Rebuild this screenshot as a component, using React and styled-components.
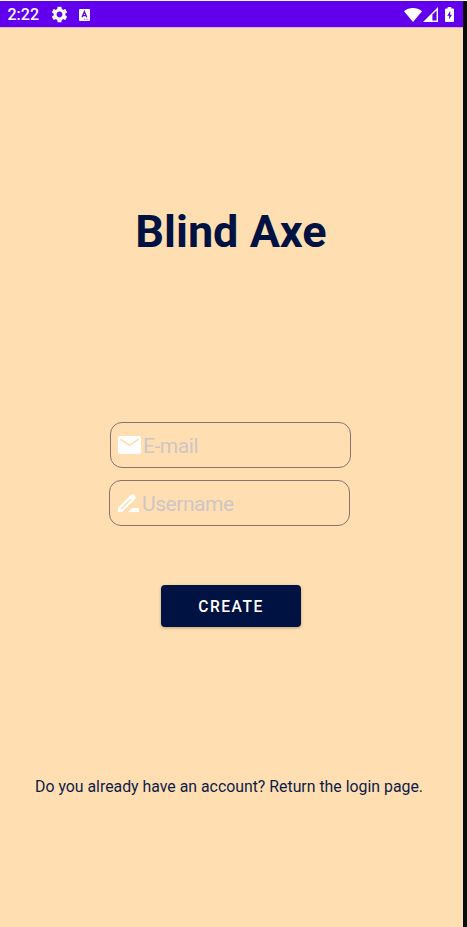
import React from "react";
import styled, { createGlobalStyle } from "styled-components";

const GlobalStyle = createGlobalStyle`
  * { box-sizing: border-box; }
  body { margin: 0; background: #fff; font-family: Roboto, sans-serif; }
`;

const Device = styled.div`
  width: 467px;
  height: 927px;
  padding-top: 1px;
  background: #fff;
  overflow: hidden;
`;

const Screen = styled.div`
  height: 926px;
  border-right: 4px solid #0c0c0c;
  background: #ffdfb2;
  display: flex;
  flex-direction: column;
`;

const StatusBar = styled.header`
  height: 26px;
  flex: none;
  background: #6200ee;
  box-shadow: 0 1px 0 rgba(98, 0, 238, 0.2);
  color: #fff;
  display: flex;
  align-items: center;
  justify-content: space-between;
  padding: 1px 9px 0 7.5px;
`;

const StatusGroup = styled.div`
  display: flex;
  align-items: center;
  gap: ${(p) => p.$gap}px;
`;

const Clock = styled.span`
  font-size: 16px;
  line-height: 20px;
  font-weight: 500;
  width: 32px;
  margin-right: 1px;
`;

const Icon = styled.svg`
  display: block;
  flex: none;
  fill: #fff;
`;

const KeyboardSlot = styled.span`
  margin-left: 2px;
`;

const BatterySlot = styled.span`
  margin-left: 7px;
`;

const Content = styled.main`
  flex: 1;
  display: flex;
  flex-direction: column;
  align-items: center;
  padding-right: 1px;
`;

const Title = styled.h1`
  margin: 178px 0 0;
  font-size: 45px;
  line-height: 54px;
  font-weight: 700;
  color: #001242;
`;

const Form = styled.form`
  margin-top: 163px;
  width: 242px;
  display: flex;
  flex-direction: column;
  gap: 12px;
`;

const Field = styled.label`
  height: 46px;
  width: 241px;
  margin-left: ${(p) => p.$shift || 0}px;
  border: 1px solid #8a7272;
  border-radius: 12px;
  display: flex;
  align-items: center;
  padding-left: ${(p) => p.$inset}px;
`;

const Input = styled.input`
  border: 0;
  outline: 0;
  padding: 0;
  margin: 2px 0 0 ${(p) => p.$gap}px;
  width: 190px;
  height: 28px;
  background: transparent;
  font: 400 21px/28px Roboto, sans-serif;
  letter-spacing: -0.45px;
  color: #001242;
  &::placeholder { color: #cfc5c5; opacity: 1; }
`;

const CreateButton = styled.button`
  align-self: center;
  margin-top: 47px;
  width: 140px;
  height: 42px;
  padding: 2px 0 0;
  border: 0;
  border-radius: 4px;
  background: #001242;
  color: #fff;
  font: 500 15.6px/20px Roboto, sans-serif;
  letter-spacing: 1.5px;
  box-shadow: 0 1px 3px rgba(60, 40, 10, 0.35);
`;

const LoginLink = styled.p`
  margin: 149px 0 0;
  padding-right: 4px;
  font-size: 15.85px;
  line-height: 22px;
  white-space: nowrap;
  color: #0c1c48;
`;

const GearIcon = () => (
  <Icon width="17" height="17" viewBox="1.5 1.5 21 21">
    <path d="M19.14 12.94c.04-.3.06-.61.06-.94 0-.32-.02-.64-.07-.94l2.03-1.58c.18-.14.23-.41.12-.61l-1.92-3.32c-.12-.22-.37-.29-.59-.22l-2.39.96c-.5-.38-1.03-.7-1.62-.94l-.36-2.54c-.04-.24-.24-.41-.48-.41h-3.84c-.24 0-.43.17-.47.41l-.36 2.54c-.59.24-1.13.57-1.62.94l-2.39-.96c-.22-.08-.47 0-.59.22L2.74 8.87c-.12.21-.08.47.12.61l2.03 1.58c-.05.3-.09.63-.09.94s.02.64.07.94l-2.03 1.58c-.18.14-.23.41-.12.61l1.92 3.32c.12.22.37.29.59.22l2.39-.96c.5.38 1.03.7 1.62.94l.36 2.54c.05.24.24.41.48.41h3.84c.24 0 .44-.17.47-.41l.36-2.54c.59-.24 1.13-.56 1.62-.94l2.39.96c.22.08.47 0 .59-.22l1.92-3.32c.12-.22.07-.47-.12-.61l-2.01-1.58zM12 15.6c-1.98 0-3.6-1.62-3.6-3.6s1.62-3.6 3.6-3.6 3.6 1.62 3.6 3.6-1.62 3.6-3.6 3.6z" />
  </Icon>
);

const KeyboardIcon = () => (
  <Icon width="11" height="12" viewBox="0 0 11 12">
    <rect width="11" height="12" rx="1" />
    <path d="M3 8.2 5.4 2.7 7.8 8.2M3.8 6.6H7" fill="none" stroke="#6200ee" strokeWidth="1.3" />
    <path d="M5 10.2h4.3" stroke="#6200ee" strokeWidth=".6" strokeDasharray="1 .6" />
  </Icon>
);

const WifiIcon = () => (
  <Icon width="18" height="14" viewBox="0 0 18 14">
    <path d="M9 14 0 3.2C2.6 1.1 5.7 0 9 0s6.4 1.1 9 3.2Z" />
  </Icon>
);

const SignalIcon = () => (
  <Icon width="15" height="15" viewBox="0 0 15 15">
    <path fillRule="evenodd" d="M0 15 15 0v15ZM9.4 13.6h4.2V3.4L9.4 7.6Z" />
  </Icon>
);

const BatteryIcon = () => (
  <Icon width="9" height="15" viewBox="0 0 9 15">
    <path d="M2.7 0h3.6v1.5H8q1 0 1 1V14q0 1-1 1H1q-1 0-1-1V2.5q0-1 1-1h1.7Z" />
    <path fill="#6200ee" d="M5.2 4 2.2 8.8h1.9v3.4L7 7.8H5.2Z" />
  </Icon>
);

const MailIcon = () => (
  <Icon width="23" height="18" viewBox="0 0 23 18">
    <rect width="23" height="18" rx="2.2" />
    <path d="m2.3 3.3 9.2 6 9.2-6" fill="none" stroke="#ffdfb2" strokeWidth="1.7" />
  </Icon>
);

const PencilIcon = () => (
  <Icon width="21" height="18" viewBox="0 0 21 18">
    <path
      fillRule="evenodd"
      d="M0 18v-4.200L13 .8q1.300-1.300 2.700 0l1.400 1.400q1.400 1.400 0 2.700L4.200 18ZM2.500 15.500h1L13.500 5.800l-1-1-10 9.700Z"
    />
    <path d="M10.300 18 14.300 14H21v4Z" />
  </Icon>
);

export default function App() {
  return (
    <Device>
      <GlobalStyle />
      <Screen>
        <StatusBar>
          <StatusGroup $gap={9}>
            <StatusGroup $gap={10}>
              <Clock>2:22</Clock>
              <GearIcon />
            </StatusGroup>
            <KeyboardSlot>
              <KeyboardIcon />
            </KeyboardSlot>
          </StatusGroup>
          <StatusGroup $gap={0.5}>
            <WifiIcon />
            <SignalIcon />
            <BatterySlot>
              <BatteryIcon />
            </BatterySlot>
          </StatusGroup>
        </StatusBar>
        <Content>
          <Title>Blind Axe</Title>
          <Form onSubmit={(e) => e.preventDefault()}>
            <Field $inset={7}>
              <MailIcon />
              <Input $gap={2} type="email" placeholder="E-mail" aria-label="E-mail" />
            </Field>
            <Field $inset={8} $shift={-1}>
              <PencilIcon />
              <Input $gap={3} type="text" placeholder="Username" aria-label="Username" />
            </Field>
            <CreateButton type="submit">CREATE</CreateButton>
          </Form>
          <LoginLink>Do you already have an account? Return the login page.</LoginLink>
        </Content>
      </Screen>
    </Device>
  );
}
